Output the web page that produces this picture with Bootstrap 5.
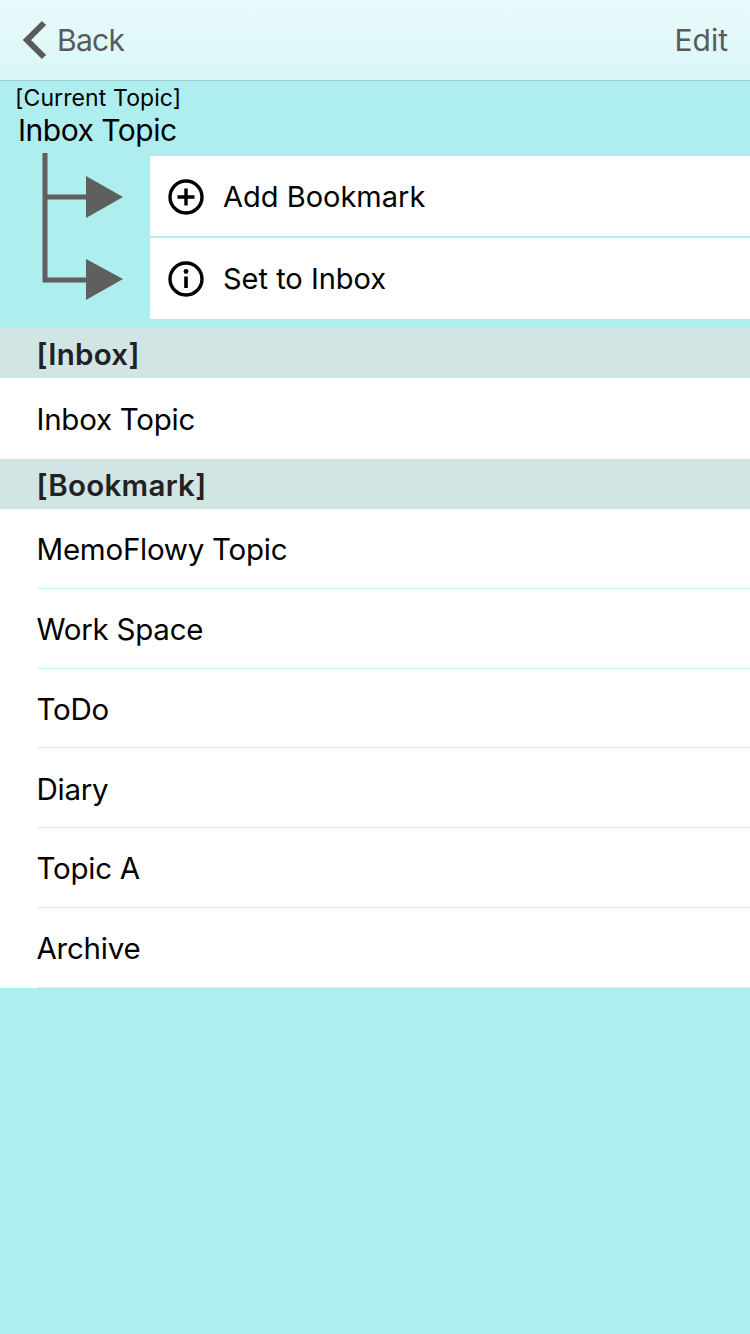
<!DOCTYPE html>
<html lang="en">
<head>
<meta charset="utf-8">
<title>Topics</title>
<link href="https://cdn.jsdelivr.net/npm/bootstrap@5.3.0/dist/css/bootstrap.min.css" rel="stylesheet">
<style>
html,body{height:100%}
body{background:#aeeeee;font-family:Inter,"Liberation Sans",sans-serif;color:#000;width:750px;min-height:1334px}
.topbar{height:81px;background:linear-gradient(#e8f9fa,#dbf7f8);border-bottom:1px solid #9fd0d1;color:#5a5a5a;font-size:30px;padding:0 22px}
.topbar svg{display:block}
.back-lbl{margin-left:9px;letter-spacing:-.7px}
.cur-label{font-size:23px;line-height:28px;padding:3px 0 0 15px;letter-spacing:.1px;height:31px}
.cur-name{font-size:30px;line-height:36px;padding-left:18px;height:44px;letter-spacing:-.5px}
.act-wrap{height:163px;margin-bottom:9px}
.tree-col{width:150px;flex:none;margin-top:-3px}
.tree-col svg{display:block}
.act-list{flex:1;border-radius:0;--bs-list-group-color:#000}
.act-item{height:82px;border:0;border-bottom:2px solid #b6f0f0;border-radius:0!important;padding:2px 0 0 18px;font-size:29px;gap:19px;letter-spacing:0;color:#000}
.act-item:last-child{height:81px;border-bottom:0;padding-top:0}
.sec-head{height:50px;background:#d1e5e4;color:#222;font-weight:600;font-size:29.500px;line-height:52px;padding-left:36.500px;letter-spacing:.3px}
.topic-list{border-radius:0}
.topic-item{height:79.800px;border:0;border-radius:0!important;background:#fff;color:#000;padding:0 0 0 36.500px;font-size:29.500px;letter-spacing:-.25px}
.topic-inner{display:flex;align-items:center;height:100%;padding-top:2px;border-bottom:1px solid #d2f4f4}
.topic-solo{height:81px}
.topic-solo .topic-inner{border-bottom:0}
</style>
</head>
<body>
<nav class="topbar d-flex align-items-center justify-content-between">
  <div class="d-flex align-items-center">
    <svg width="26" height="40" viewBox="0 0 26 40"><path d="M22 3 L5 20 L22 37" fill="none" stroke="#5a5a5a" stroke-width="6"/></svg>
    <span class="back-lbl">Back</span>
  </div>
  <span>Edit</span>
</nav>
<div class="cur-label">[Current Topic]</div>
<div class="cur-name">Inbox Topic</div>
<div class="act-wrap d-flex">
  <div class="tree-col">
    <svg width="150" height="150" viewBox="0 0 150 150">
      <path d="M45 0 V127 H88 M45 44 H88" fill="none" stroke="#5f5f5f" stroke-width="5"/>
      <path d="M86 23 L123 44 L86 65 Z M86 106 L123 126 L86 147 Z" fill="#5f5f5f"/>
    </svg>
  </div>
  <div class="list-group act-list">
    <div class="list-group-item act-item d-flex align-items-center">
      <svg width="36" height="36" viewBox="0 0 36 36"><circle cx="18" cy="18" r="16" fill="none" stroke="#000" stroke-width="3.400"/><path d="M18 9.500V26.500M9.500 18H26.500" stroke="#000" stroke-width="3.400"/></svg>
      <span>Add Bookmark</span>
    </div>
    <div class="list-group-item act-item d-flex align-items-center">
      <svg width="36" height="36" viewBox="0 0 36 36"><circle cx="18" cy="18" r="16" fill="none" stroke="#000" stroke-width="3.400"/><path d="M18 15.500V27" stroke="#000" stroke-width="3.600"/><circle cx="18" cy="10.500" r="2.400" fill="#000"/></svg>
      <span>Set to Inbox</span>
    </div>
  </div>
</div>
<div class="sec-head">[Inbox]</div>
<div class="list-group topic-list">
  <div class="list-group-item topic-item topic-solo"><div class="topic-inner">Inbox Topic</div></div>
</div>
<div class="sec-head">[Bookmark]</div>
<div class="list-group topic-list">
  <div class="list-group-item topic-item"><div class="topic-inner">MemoFlowy Topic</div></div>
  <div class="list-group-item topic-item"><div class="topic-inner">Work Space</div></div>
  <div class="list-group-item topic-item"><div class="topic-inner">ToDo</div></div>
  <div class="list-group-item topic-item"><div class="topic-inner">Diary</div></div>
  <div class="list-group-item topic-item"><div class="topic-inner">Topic A</div></div>
  <div class="list-group-item topic-item"><div class="topic-inner">Archive</div></div>
</div>
<script src="https://cdn.jsdelivr.net/npm/bootstrap@5.3.0/dist/js/bootstrap.bundle.min.js"></script>
</body>
</html>
